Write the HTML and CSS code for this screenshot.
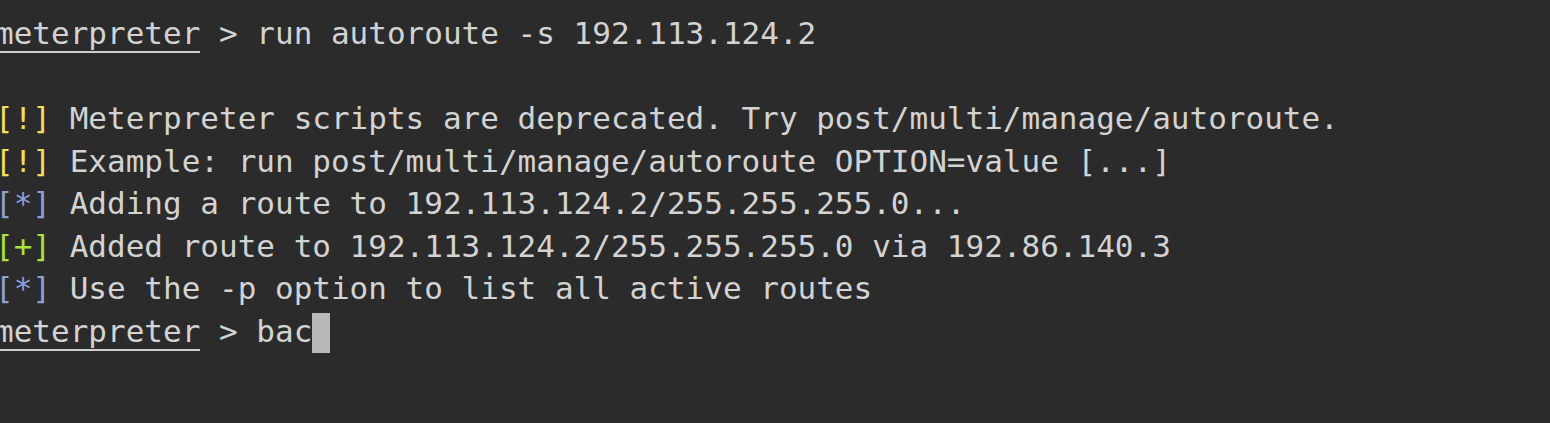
FILE: index.html
```html
<!DOCTYPE html>
<html>
<head>
<meta charset="utf-8">
<link rel="stylesheet" href="styles.css">
</head>
<body>
<div class="term">
<div class="line"><span class="prompt">meterpreter</span> &gt; run autoroute -s 192.113.124.2</div>
<div class="line"> </div>
<div class="line"><span class="warn">[!]</span> Meterpreter scripts are deprecated. Try post/multi/manage/autoroute.</div>
<div class="line"><span class="warn">[!]</span> Example: run post/multi/manage/autoroute OPTION=value [...]</div>
<div class="line"><span class="info">[*]</span> Adding a route to 192.113.124.2/255.255.255.0...</div>
<div class="line"><span class="good">[+]</span> Added route to 192.113.124.2/255.255.255.0 via 192.86.140.3</div>
<div class="line"><span class="info">[*]</span> Use the -p option to list all active routes</div>
<div class="line"><span class="prompt">meterpreter</span> &gt; bac<span class="cursor"></span></div>
</div>
</body>
</html>
```
FILE: styles.css
```css
html, body {
  margin: 0;
  padding: 0;
  background: #2b2b2b;
  height: 100%;
  overflow: hidden;
}
.term {
  padding: 12px 0 0 0;
  margin-left: -5px;
  font-family: "DejaVu Sans Mono", "Liberation Mono", monospace;
  font-size: 31px;
  line-height: 42.5px;
  color: #d3d3d3;
}
.line {
  height: 42.5px;
  white-space: pre;
}
.prompt {
  border-bottom: 2px solid #cfcfcf;
}
.warn { color: #efdf5c; }
.info { color: #8d9fd8; }
.good { color: #a9e23e; }
.cursor {
  display: inline-block;
  width: 18px;
  height: 40px;
  background: #b9b9b9;
  vertical-align: -11px;
}
```
